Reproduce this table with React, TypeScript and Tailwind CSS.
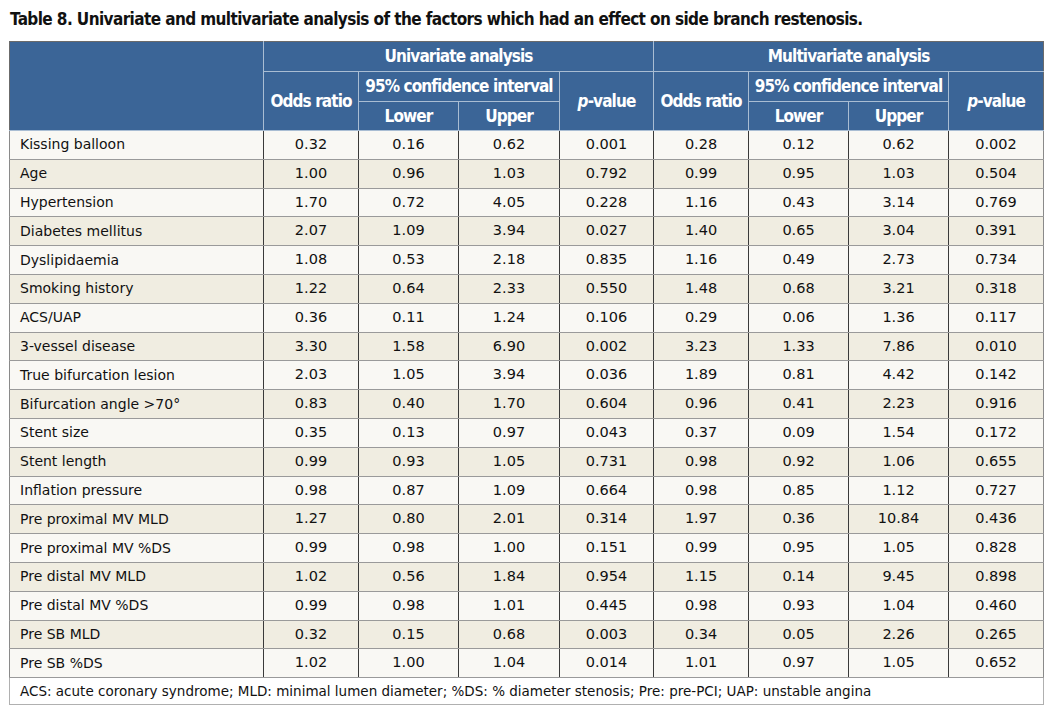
import React from "react";

const rows: [string, string[]][] = [
  ["Kissing balloon", ["0.32", "0.16", "0.62", "0.001", "0.28", "0.12", "0.62", "0.002"]],
  ["Age", ["1.00", "0.96", "1.03", "0.792", "0.99", "0.95", "1.03", "0.504"]],
  ["Hypertension", ["1.70", "0.72", "4.05", "0.228", "1.16", "0.43", "3.14", "0.769"]],
  ["Diabetes mellitus", ["2.07", "1.09", "3.94", "0.027", "1.40", "0.65", "3.04", "0.391"]],
  ["Dyslipidaemia", ["1.08", "0.53", "2.18", "0.835", "1.16", "0.49", "2.73", "0.734"]],
  ["Smoking history", ["1.22", "0.64", "2.33", "0.550", "1.48", "0.68", "3.21", "0.318"]],
  ["ACS/UAP", ["0.36", "0.11", "1.24", "0.106", "0.29", "0.06", "1.36", "0.117"]],
  ["3-vessel disease", ["3.30", "1.58", "6.90", "0.002", "3.23", "1.33", "7.86", "0.010"]],
  ["True bifurcation lesion", ["2.03", "1.05", "3.94", "0.036", "1.89", "0.81", "4.42", "0.142"]],
  ["Bifurcation angle >70°", ["0.83", "0.40", "1.70", "0.604", "0.96", "0.41", "2.23", "0.916"]],
  ["Stent size", ["0.35", "0.13", "0.97", "0.043", "0.37", "0.09", "1.54", "0.172"]],
  ["Stent length", ["0.99", "0.93", "1.05", "0.731", "0.98", "0.92", "1.06", "0.655"]],
  ["Inflation pressure", ["0.98", "0.87", "1.09", "0.664", "0.98", "0.85", "1.12", "0.727"]],
  ["Pre proximal MV MLD", ["1.27", "0.80", "2.01", "0.314", "1.97", "0.36", "10.84", "0.436"]],
  ["Pre proximal MV %DS", ["0.99", "0.98", "1.00", "0.151", "0.99", "0.95", "1.05", "0.828"]],
  ["Pre distal MV MLD", ["1.02", "0.56", "1.84", "0.954", "1.15", "0.14", "9.45", "0.898"]],
  ["Pre distal MV %DS", ["0.99", "0.98", "1.01", "0.445", "0.98", "0.93", "1.04", "0.460"]],
  ["Pre SB MLD", ["0.32", "0.15", "0.68", "0.003", "0.34", "0.05", "2.26", "0.265"]],
  ["Pre SB %DS", ["1.02", "1.00", "1.04", "0.014", "1.01", "0.97", "1.05", "0.652"]],
];

const widths = [254, 95, 100, 101, 94, 95, 100, 100, 95];

const head =
  "p-0 whitespace-nowrap bg-[#3b6597] text-white font-bold text-[17px] leading-none border border-[#a9bdd3] font-['DejaVu_Sans_Condensed','Liberation_Sans_Narrow','DejaVu_Sans',sans-serif] font-stretch-condensed tracking-[-0.9px]";

function PValue() {
  return (
    <>
      <span className="italic">p</span>-value
    </>
  );
}

export default function App() {
  return (
    <div className="w-[1055px] h-[718px] bg-white pt-[8px]">
      <h1 className="pl-[10px] h-[33px] leading-[22px] text-[17px] font-bold text-[#111] whitespace-nowrap font-['DejaVu_Sans_Condensed','Liberation_Sans_Narrow','DejaVu_Sans',sans-serif] font-stretch-condensed tracking-[-0.6px]">
        Table 8. Univariate and multivariate analysis of the factors which had an effect on side branch restenosis.
      </h1>
      <table className="ml-[9px] border-collapse table-fixed w-[1034px] font-['DejaVu_Sans',sans-serif] text-[14.5px] text-[#111]">
        <colgroup>
          {widths.map((w, i) => (
            <col key={i} style={{ width: w }} />
          ))}
        </colgroup>
        <thead>
          <tr className="h-[30px]">
            <th rowSpan={3} className={`${head} border-l-[#6b6b6b] border-t-[#6b6b6b]`}></th>
            <th colSpan={4} className={`${head} border-t-[#6b6b6b]`}>Univariate analysis</th>
            <th colSpan={4} className={`${head} border-t-[#6b6b6b] border-r-[#6b6b6b]`}>Multivariate analysis</th>
          </tr>
          <tr className="h-[30px]">
            <th rowSpan={2} className={head}>Odds ratio</th>
            <th colSpan={2} className={head}>95% confidence interval</th>
            <th rowSpan={2} className={head}><PValue /></th>
            <th rowSpan={2} className={head}>Odds ratio</th>
            <th colSpan={2} className={head}>95% confidence interval</th>
            <th rowSpan={2} className={`${head} border-r-[#6b6b6b]`}><PValue /></th>
          </tr>
          <tr className="h-[29px]">
            <th className={head}>Lower</th>
            <th className={head}>Upper</th>
            <th className={head}>Lower</th>
            <th className={head}>Upper</th>
          </tr>
        </thead>
        <tbody>
          {rows.map(([label, vals], i) => (
            <tr
              key={label}
              className={`h-[28.8px] ${i % 2 === 0 ? "bg-[#f9f8f4]" : "bg-[#f0ede1]"}`}
            >
              <td className="p-0 pl-[10px] text-[14px] border-l border-l-[#8a8a8a] border-y border-y-[#9a9a9a] border-r border-r-[#3a3a3a]">
                {label}
              </td>
              {vals.map((v, j) => (
                <td
                  key={j}
                  className={`p-0 text-center border-y border-y-[#9a9a9a] border-r ${
                    j === 7 ? "border-r-[#8a8a8a]" : "border-r-[#3a3a3a]"
                  }`}
                >
                  {v}
                </td>
              ))}
            </tr>
          ))}
          <tr className="h-[27px] bg-white">
            <td
              colSpan={9}
              className="p-0 pl-[10px] text-[13.5px] border border-[#b0b0b0] border-t-[#9a9a9a]"
            >
              ACS: acute coronary syndrome; MLD: minimal lumen diameter; %DS: % diameter stenosis; Pre: pre-PCI; UAP: unstable angina
            </td>
          </tr>
        </tbody>
      </table>
    </div>
  );
}
